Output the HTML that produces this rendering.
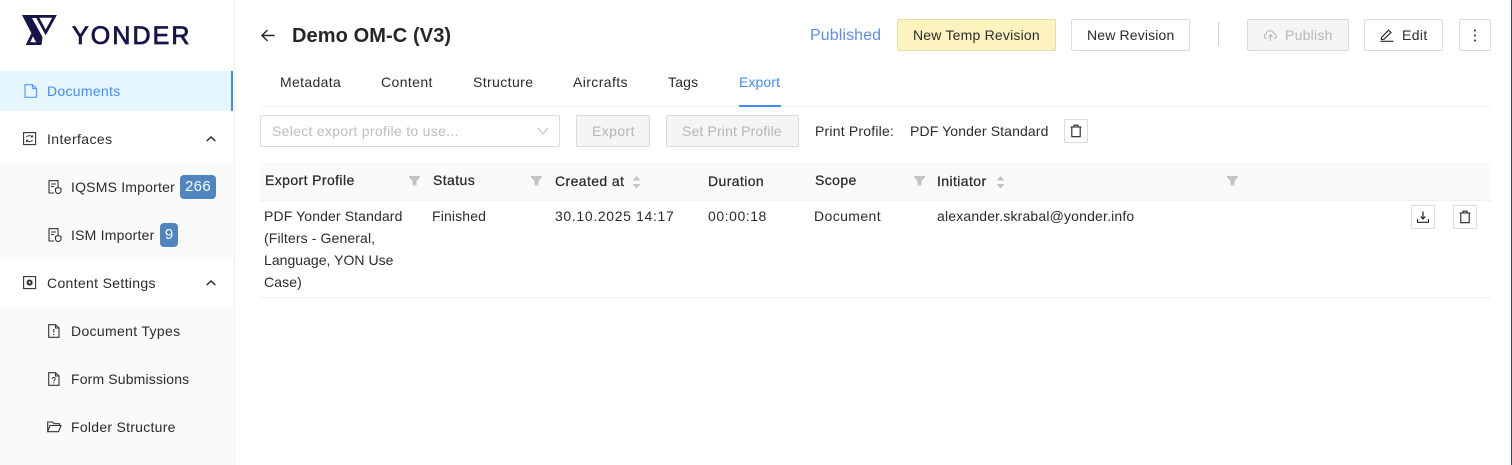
<!DOCTYPE html>
<html><head><meta charset="utf-8"><style>
html,body{margin:0;padding:0;background:#fff}
body{width:1512px;height:465px;position:relative;overflow:hidden;font-family:"Liberation Sans",sans-serif;font-size:14px;color:#2b2b2b;letter-spacing:.3px}
.t{position:absolute;white-space:nowrap;line-height:20px}
.b{position:absolute;box-sizing:border-box;border:1px solid #dcdcdc;border-radius:2px;background:#fff}
.d{background:#f5f5f5;border-color:#d9d9d9}
.g{color:#b5b5b5}
.h{font-weight:400;color:#2a2a2a;-webkit-text-stroke:.25px #2a2a2a;letter-spacing:.4px}
svg{position:absolute;overflow:visible}
.s{fill:none;stroke:#333;stroke-width:1.1}
</style></head><body>
<div style="position:absolute;left:0;top:0;width:234px;height:465px;background:#fff;border-right:1px solid #efefef;box-sizing:content-box"></div>
<div style="position:absolute;left:0;top:163px;width:233px;height:96px;background:#fafafa"></div>
<div style="position:absolute;left:0;top:307px;width:233px;height:158px;background:#fafafa"></div>
<div style="position:absolute;left:0;top:71px;width:233px;height:40px;background:#e6f6ff"></div>
<div style="position:absolute;left:231px;top:71px;width:2px;height:40px;background:#3f8cff"></div>
<div style="position:absolute;left:1511px;top:0;width:1px;height:465px;background:#3a4350"></div>

<svg style="left:0;top:0" width="70" height="50"><path d="M22 15H37L38 18H32L42.5 37L41.5 45H37.5Z" fill="#15154a"/><g fill="none" stroke="#15154a" stroke-width="2.8"><path d="M37 16.4H54.5L45.7 32.5Z"/><path d="M34 31L28 43.6H40"/></g></svg>
<div class="t" style="left:72px;top:21px;font-size:25px;line-height:30px;letter-spacing:2.1px;color:#15154a;-webkit-text-stroke:.8px #15154a">YONDER</div>

<svg style="left:24px;top:84px" width="14" height="14"><path d="M1 .7H8.5L12.5 4.5V13.3H1Z M8.5 .7V4.5H12.5" fill="none" stroke="#5a9bff" stroke-width="1.2"/></svg>
<div class="t" style="left:47px;top:81px;color:#3f8cff">Documents</div>

<svg style="left:23px;top:132px" width="14" height="14"><rect x=".6" y=".6" width="12" height="12" class="s"/><path d="M3.5 5.2C4 3.6 7.5 3 9.5 4.8M9.5 3.2V5H7.8M9.5 8C9 9.6 5.5 10.2 3.5 8.4M3.5 10V8.2H5.2" class="s" style="stroke-width:.9"/></svg>
<div class="t" style="left:47px;top:129px;letter-spacing:.4px">Interfaces</div>
<svg style="left:206px;top:136px" width="10" height="6"><path d="M.7 5L5 1L9.3 5" fill="none" stroke="#222" stroke-width="1.4"/></svg>

<svg style="left:48px;top:180px" width="14" height="14"><path d="M10 7V.7H1V13H6M3 4H8M3 6.5H6" class="s"/><path d="M10 7.5L13 8.5V11C13 12.5 11 13.5 10 13.7C9 13.5 7.5 12.5 7.5 11V8.5Z" class="s"/></svg>
<div class="t" style="left:71px;top:177px;letter-spacing:.2px">IQSMS Importer</div>
<div style="position:absolute;left:180px;top:175px;width:36px;height:24px;border-radius:4px;background:#4f86c0;color:#fff;text-align:center;line-height:24px;font-size:15px">266</div>

<svg style="left:48px;top:228px" width="14" height="14"><path d="M10 7V.7H1V13H6M3 4H8M3 6.5H6" class="s"/><path d="M10 7.5L13 8.5V11C13 12.5 11 13.5 10 13.7C9 13.5 7.5 12.5 7.5 11V8.5Z" class="s"/></svg>
<div class="t" style="left:71px;top:225px;letter-spacing:.22px">ISM Importer</div>
<div style="position:absolute;left:160px;top:223px;width:18px;height:24px;border-radius:4px;background:#4f86c0;color:#fff;text-align:center;line-height:24px;font-size:15px;letter-spacing:0">9</div>

<svg style="left:23px;top:276px" width="14" height="14"><rect x=".6" y=".6" width="12" height="12" class="s"/><path d="M6.6 3.2L9.5 4.9V8.2L6.6 9.9L3.7 8.2V4.9Z" fill="#333"/><circle cx="6.6" cy="6.5" r="1" fill="#fff"/></svg>
<div class="t" style="left:47px;top:273px;letter-spacing:.33px">Content Settings</div>
<svg style="left:206px;top:280px" width="10" height="6"><path d="M.7 5L5 1L9.3 5" fill="none" stroke="#222" stroke-width="1.4"/></svg>

<svg style="left:48px;top:324px" width="12" height="14"><path d="M.7 .7H7.5L11 4V13.3H.7Z M7.5 .7V4H11" class="s"/><path d="M5.8 5V8.5M5.8 10V11" class="s"/></svg>
<div class="t" style="left:71px;top:321px;letter-spacing:.33px">Document Types</div>
<svg style="left:48px;top:372px" width="12" height="14"><path d="M.7 .7H7.5L11 4V13.3H.7Z M7.5 .7V4H11" class="s"/><path d="M4.3 7C4.3 5 7.3 5 7.3 7C7.3 8 5.8 8 5.8 9.5M5.8 10.3V11.2" class="s" style="stroke-width:.9"/></svg>
<div class="t" style="left:71px;top:369px;letter-spacing:.15px">Form Submissions</div>
<svg style="left:47px;top:421px" width="15" height="12"><path d="M.7 10.7V1H5.5L7 2.7H12.5V4.5M.7 10.7H11.5L14 4.5H3Z" class="s"/></svg>
<div class="t" style="left:71px;top:417px;letter-spacing:.27px">Folder Structure</div>

<svg style="left:261px;top:29px" width="14" height="13"><path d="M13.5 6.5H1M6.5 1L1 6.5L6.5 12" fill="none" stroke="#222" stroke-width="1.4"/></svg>
<div class="t" style="left:292px;top:24px;font-size:20px;line-height:24px;font-weight:700;letter-spacing:.1px;color:#262626">Demo OM-C (V3)</div>

<div class="t" style="left:810px;top:26px;font-size:16px;letter-spacing:.1px;color:#5b8def">Published</div>
<div class="b" style="left:897px;top:19px;width:159px;height:32px;background:#fdf3bf;border-color:#e2dcae"></div>
<div class="t" style="left:913px;top:25px;letter-spacing:.2px">New Temp Revision</div>
<div class="b" style="left:1071px;top:19px;width:119px;height:32px"></div>
<div class="t" style="left:1087px;top:25px;letter-spacing:.15px">New Revision</div>
<div style="position:absolute;left:1218px;top:22px;width:1px;height:24px;background:#d4d4d4"></div>
<div class="b d" style="left:1247px;top:19px;width:102px;height:32px"></div>
<svg style="left:1263px;top:28px" width="15" height="14"><path d="M4 10.5H3.5C1 10.5 .5 7 3 6.3C3.3 3 7 1.5 9.5 3.7C10.3 4.3 10.7 5 10.9 6C13.7 6.3 14 10 11.5 10.5H11M7.5 13V6.8M5.3 9L7.5 6.8L9.7 9" fill="none" stroke="#b5b5b5" stroke-width="1.1"/></svg>
<div class="t g" style="left:1285px;top:25px;letter-spacing:.25px">Publish</div>
<div class="b" style="left:1364px;top:19px;width:79px;height:32px"></div>
<svg style="left:1380px;top:28px" width="14" height="14"><path d="M1.5 9.5L8.5 2.2L11 4.5L4 11.2L1.3 11.5Z" class="s" style="stroke:#222"/><path d="M.5 13.3H13.5" class="s" style="stroke:#222"/></svg>
<div class="t" style="left:1402px;top:25px;letter-spacing:.4px">Edit</div>
<div class="b" style="left:1459px;top:19px;width:32px;height:32px"></div>
<svg style="left:1473px;top:28px" width="4" height="14"><circle cx="2" cy="2.5" r="1.1" fill="#444"/><circle cx="2" cy="7.5" r="1.1" fill="#444"/><circle cx="2" cy="12.5" r="1.1" fill="#444"/></svg>

<div class="t" style="left:280px;top:72px;letter-spacing:.35px">Metadata</div>
<div class="t" style="left:381px;top:72px;letter-spacing:.4px">Content</div>
<div class="t" style="left:473px;top:72px;letter-spacing:.4px">Structure</div>
<div class="t" style="left:573px;top:72px;letter-spacing:.4px">Aircrafts</div>
<div class="t" style="left:668px;top:72px;letter-spacing:.2px">Tags</div>
<div class="t" style="left:739px;top:72px;color:#3f8cff;letter-spacing:.1px">Export</div>
<div style="position:absolute;left:260px;top:106px;width:1231px;height:1px;background:#f0f0f0"></div>
<div style="position:absolute;left:739px;top:105px;width:42px;height:2px;background:#3f8cff"></div>

<div class="b" style="left:260px;top:115px;width:300px;height:32px"></div>
<div class="t" style="left:272px;top:121px;color:#bdbdbd;letter-spacing:.3px">Select export profile to use...</div>
<svg style="left:537px;top:127px" width="12" height="8"><path d="M1 1L6 7L11 1" fill="none" stroke="#c0c0c0" stroke-width="1"/></svg>
<div class="b d" style="left:576px;top:115px;width:74px;height:32px"></div>
<div class="t g" style="left:592px;top:121px;letter-spacing:.4px">Export</div>
<div class="b d" style="left:666px;top:115px;width:133px;height:32px"></div>
<div class="t g" style="left:682px;top:121px;letter-spacing:.15px">Set Print Profile</div>
<div class="t" style="left:815px;top:121px;letter-spacing:.2px">Print Profile:</div>
<div class="t" style="left:910px;top:121px;letter-spacing:.12px">PDF Yonder Standard</div>
<div class="b" style="left:1064px;top:119px;width:24px;height:24px;border-radius:1px"></div>
<svg style="left:1070px;top:124px" width="12" height="14"><path d="M.5 3H11.5M4 3V1.2H8V3M1.8 3V12.7H10.2V3" fill="none" stroke="#222" stroke-width="1.1"/></svg>

<div style="position:absolute;left:260px;top:162px;width:1231px;height:38px;background:#fafafa;border-bottom:1px solid #efefef;box-sizing:content-box"></div>
<div class="t h" style="left:265px;top:170px">Export Profile</div>
<div class="t h" style="left:433px;top:170px">Status</div>
<div class="t h" style="left:555px;top:171px">Created at</div>
<div class="t h" style="left:708px;top:171px">Duration</div>
<div class="t h" style="left:815px;top:170px">Scope</div>
<div class="t h" style="left:937px;top:171px">Initiator</div>

<svg style="left:409px;top:176px" width="11" height="10"><path d="M0 0H11V1.5L7.5 5V9.5H3.5V5L0 1.5Z" fill="#c4c4c4"/></svg>
<svg style="left:531px;top:176px" width="11" height="10"><path d="M0 0H11V1.5L7.5 5V9.5H3.5V5L0 1.5Z" fill="#c4c4c4"/></svg>
<svg style="left:914px;top:176px" width="11" height="10"><path d="M0 0H11V1.5L7.5 5V9.5H3.5V5L0 1.5Z" fill="#c4c4c4"/></svg>
<svg style="left:1227px;top:176px" width="11" height="10"><path d="M0 0H11V1.5L7.5 5V9.5H3.5V5L0 1.5Z" fill="#c4c4c4"/></svg>
<svg style="left:632px;top:176px" width="9" height="13"><path d="M4.5 0L8.5 4.5H.5Z M.5 8H8.5L4.5 12.5Z" fill="#c4c4c4"/></svg>
<svg style="left:996px;top:176px" width="9" height="13"><path d="M4.5 0L8.5 4.5H.5Z M.5 8H8.5L4.5 12.5Z" fill="#c4c4c4"/></svg>

<div class="t" style="left:264px;top:205px;line-height:22px;letter-spacing:.12px">PDF Yonder Standard<br>(Filters - General,<br><span style="letter-spacing:.03px">Language, YON Use</span><br>Case)</div>
<div class="t" style="left:432px;top:206px;letter-spacing:.15px">Finished</div>
<div class="t" style="left:555px;top:206px;letter-spacing:.65px">30.10.2025 14:17</div>
<div class="t" style="left:708px;top:206px;letter-spacing:.55px">00:00:18</div>
<div class="t" style="left:814px;top:206px;letter-spacing:.4px">Document</div>
<div class="t" style="left:937px;top:206px;letter-spacing:.17px">alexander.skrabal@yonder.info</div>
<div style="position:absolute;left:260px;top:297px;width:1231px;height:1px;background:#efefef"></div>

<div class="b" style="left:1411px;top:205px;width:24px;height:24px;border-radius:1px"></div>
<svg style="left:1417px;top:211px" width="12" height="12"><path d="M6 .5V7.5M3.7 5.5L6 8L8.3 5.5" fill="none" stroke="#222" stroke-width="1.2"/><path d="M.5 8V11.3H11.5V8" fill="none" stroke="#222" stroke-width="1.1"/></svg>
<div class="b" style="left:1453px;top:205px;width:24px;height:24px;border-radius:1px"></div>
<svg style="left:1459px;top:210px" width="12" height="14"><path d="M.5 3H11.5M4 3V1.2H8V3M1.8 3V12.7H10.2V3" fill="none" stroke="#222" stroke-width="1.1"/></svg>
</body></html>
